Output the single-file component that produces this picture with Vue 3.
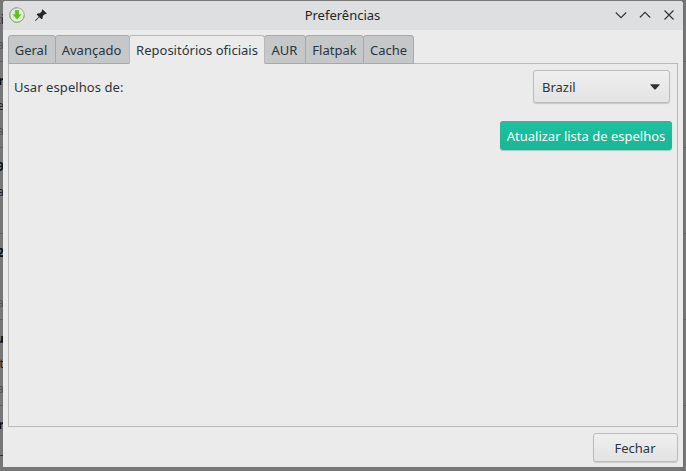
<script setup>
import { ref } from 'vue'

const tabs = [
  { label: 'Geral', width: 48, inset: 2 },
  { label: 'Avançado', width: 75, inset: 2 },
  { label: 'Repositórios oficiais', width: 136, inset: 0 },
  { label: 'AUR', width: 42, inset: 1 },
  { label: 'Flatpak', width: 59, inset: 0 },
  { label: 'Cache', width: 51, inset: 0 },
]
const active = ref(2)

const rows = [
  { name: '', desc: 'ti', repo: 'a' },
  { name: 'r', desc: 'e', repo: 'a' },
  { name: '9', desc: 'a', repo: '' },
  { name: '2', desc: '', repo: 'a' },
  { name: 'u', desc: 't', repo: 'a' },
  { name: 'r', desc: '_', repo: '' },
]
</script>

<template>
  <div class="desktop">
    <div class="backdrop">
      <div v-for="(row, i) in rows" :key="i" class="pkg">
        <span class="pkg-text name">{{ row.name }}</span>
        <span class="pkg-text">{{ row.desc }}</span>
        <span class="pkg-text repo">{{ row.repo }}</span>
      </div>
    </div>

    <div class="window">
      <header class="titlebar">
        <div class="left">
          <svg class="app-icon" width="16" height="16" viewBox="0 0 16 16">
            <circle cx="8" cy="8" r="7.3" fill="#e6e7e4" stroke="#a3aaa1" stroke-width="1" />
            <path d="M8 .7A7.3 7.3 0 1 0 15.3 8" fill="none" stroke="#86bd67" stroke-width="1" />
            <path d="M6.2 3.3h3.6v4.2h2.4L8 12.2 3.8 7.5h2.4z" fill="#58c712" stroke="#49b80b" stroke-width=".3" />
          </svg>
          <svg class="pin" width="12" height="12" viewBox="0 0 12 12">
            <path d="M7.5.2 11.8 4.5 10.7 5.2 10 4.9 7.8 7.1 7.6 9.4 6.6 10.3 4.3 8.2 .8 11.8 0 12 .2 11.2 3.8 7.7 1.7 5.4 2.6 4.5 4.9 4.3 7.1 2.1 6.8 1.3z" fill="#232629" />
          </svg>
        </div>
        <h1 class="title">Preferências</h1>
        <div class="controls">
          <svg width="12" height="12" viewBox="0 0 12 12"><path d="M.8 3.5 6 8.7 11.2 3.5" /></svg>
          <svg width="12" height="12" viewBox="0 0 12 12"><path d="M.8 8.5 6 3.3 11.2 8.5" /></svg>
          <svg width="12" height="12" viewBox="0 0 12 12"><path d="M1.5 1.5 10.5 10.5M10.5 1.5 1.5 10.5" /></svg>
        </div>
      </header>

      <div class="content">
        <nav class="tabs">
          <button
            v-for="(tab, i) in tabs"
            :key="tab.label"
            class="tab"
            :class="{ active: i === active }"
            :style="{ width: tab.width + 'px', paddingRight: tab.inset + 'px' }"
            @click="active = i"
          >{{ tab.label }}</button>
        </nav>

        <section class="panel">
          <div class="field">
            <span class="label">Usar espelhos de:</span>
            <button class="btn select">
              <span>Brazil</span>
              <svg width="10" height="6" viewBox="0 0 10 6"><path d="M0 .5C1 0 9 0 10 .5L5.5 5.6H4.5z" fill="#2c3135" /></svg>
            </button>
          </div>
          <button class="primary">Atualizar lista de espelhos</button>
        </section>

        <footer class="footer">
          <button class="btn close">Fechar</button>
        </footer>
      </div>
    </div>
  </div>
</template>

<style>
body {
  margin: 0;
  overflow: hidden;
}
</style>

<style scoped>
.desktop {
  position: relative;
  box-sizing: border-box;
  width: 686px;
  height: 471px;
  padding: 1px 3px 4px;
  overflow: hidden;
  background: linear-gradient(90deg, #777 0, #777 679px, #6d6d6d 683px, #7b7b7b 686px);
  color: #2a363b;
  font-family: "Noto Sans", sans-serif;
  font-size: 13px;
}
.backdrop {
  position: absolute;
  inset: -24px 0 0;
}
.pkg {
  box-sizing: border-box;
  height: 86px;
  padding-top: 6px;
  border-bottom: 1px solid #626263;
}
.pkg-text {
  display: flex;
  justify-content: flex-end;
  width: 4px;
  height: 25px;
  line-height: 25px;
  color: #24282a;
}
.name {
  font-weight: 700;
  color: #101214;
}
.repo {
  color: #555;
}
.window {
  position: relative;
  display: flex;
  flex-direction: column;
  height: 466px;
  overflow: hidden;
  border-radius: 3px 3px 0 0;
  background: #ebebeb;
}
.titlebar {
  display: grid;
  grid-template-columns: 1fr auto 1fr;
  align-items: center;
  box-sizing: border-box;
  height: 29px;
  padding: 0 8px 1px 6px;
  background: #dedfe1;
}
.left,
.controls {
  display: flex;
  align-items: center;
  gap: 12px;
}
.left {
  gap: 10px;
}
.title {
  margin: 0;
  padding-left: 1px;
  font-size: 13px;
  font-weight: 400;
  line-height: 18px;
  color: #232629;
}
.controls {
  justify-content: flex-end;
}
.controls path {
  fill: none;
  stroke: #303336;
  stroke-width: 1.1;
}
.content {
  display: flex;
  flex: 1;
  flex-direction: column;
  padding: 5px 5px 4px;
}
button {
  box-sizing: border-box;
  margin: 0;
  padding: 0;
  border: 0;
  font: inherit;
  color: inherit;
  white-space: nowrap;
}
.tabs {
  display: flex;
  position: relative;
  z-index: 1;
  margin-bottom: -1px;
}
.tab {
  height: 29px;
  border: 1px solid #a6a8a9;
  border-radius: 3px 3px 0 0;
  background: #c5c7c9;
  line-height: 28px;
}
.tab + .tab {
  margin-left: -1px;
}
.tab.active {
  position: relative;
  border-color: #b9b9ba;
  border-bottom-color: #ebebeb;
  background: #ebebeb;
}
.panel {
  display: flex;
  flex-direction: column;
  align-items: flex-end;
  gap: 18px;
  box-sizing: border-box;
  height: 364px;
  padding: 6px 5px;
  border: 1px solid #b9b9ba;
}
.field {
  display: flex;
  align-items: center;
  justify-content: space-between;
  align-self: stretch;
  padding-right: 2px;
}
.label {
  letter-spacing: 0.07px;
}
.btn {
  border: 1px solid #bcbcbc;
  border-radius: 3px;
  background: linear-gradient(#efefef, #e3e3e3);
  box-shadow: 0 1px 1px #00000026;
}
.select {
  display: flex;
  align-items: center;
  justify-content: space-between;
  width: 137px;
  height: 33px;
  padding: 0 9px 0 8px;
}
.primary {
  width: 172px;
  height: 29px;
  border-radius: 3px;
  background: linear-gradient(#1dc1a0, #1ab695);
  box-shadow: 0 1px 1px #00000033;
  color: #fff;
}
.footer {
  display: flex;
  justify-content: flex-end;
  padding-top: 6px;
}
.close {
  width: 85px;
  height: 29px;
  padding-right: 1px;
}
</style>
